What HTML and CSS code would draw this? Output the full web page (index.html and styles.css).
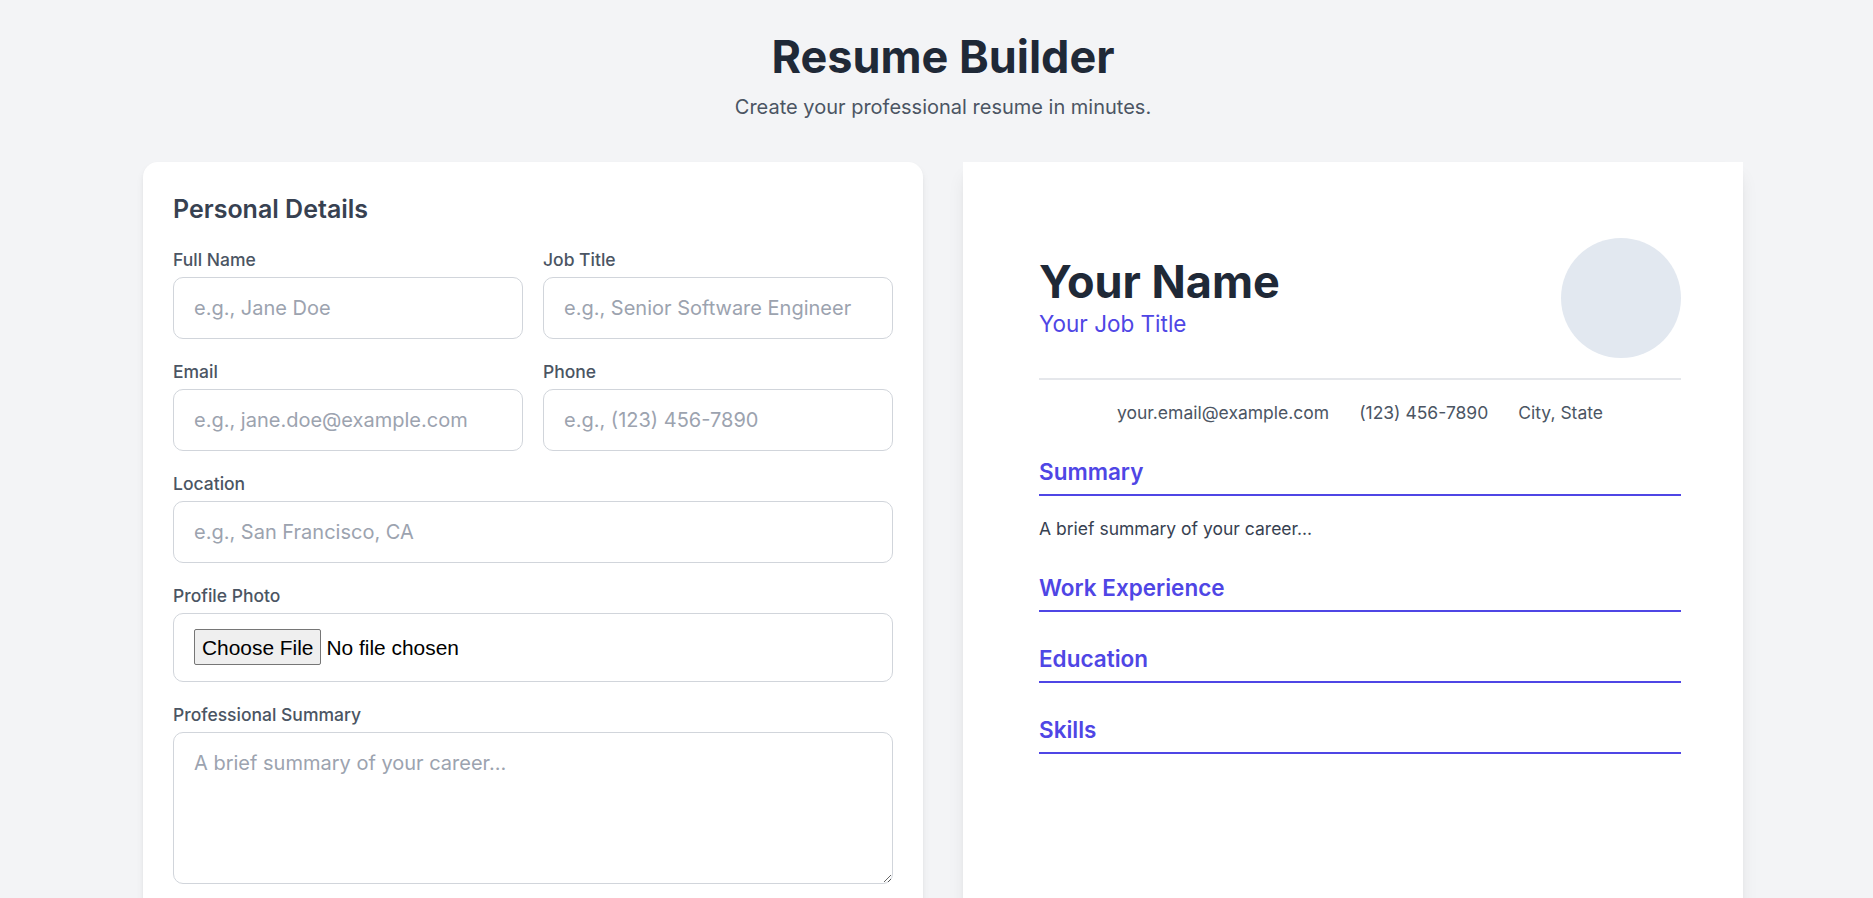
FILE: index.html
```html
<!DOCTYPE html>
<html lang="en">
<head>
<meta charset="utf-8">
<title>Resume Builder</title>
<link rel="stylesheet" href="styles.css">
</head>
<body>
<div class="page">
  <header class="page-header">
    <h1 class="page-title">Resume Builder</h1>
    <p class="page-subtitle">Create your professional resume in minutes.</p>
  </header>
  <main class="layout">
    <section class="editor">
      <h2 class="editor-title">Personal Details</h2>
      <div class="form-grid">
        <div class="field">
          <label class="field-label">Full Name</label>
          <input class="field-input" type="text" placeholder="e.g., Jane Doe">
        </div>
        <div class="field">
          <label class="field-label">Job Title</label>
          <input class="field-input" type="text" placeholder="e.g., Senior Software Engineer">
        </div>
        <div class="field">
          <label class="field-label">Email</label>
          <input class="field-input" type="email" placeholder="e.g., jane.doe@example.com">
        </div>
        <div class="field">
          <label class="field-label">Phone</label>
          <input class="field-input" type="tel" placeholder="e.g., (123) 456-7890">
        </div>
        <div class="field field-wide">
          <label class="field-label">Location</label>
          <input class="field-input" type="text" placeholder="e.g., San Francisco, CA">
        </div>
        <div class="field field-wide">
          <label class="field-label">Profile Photo</label>
          <input class="field-input field-file" type="file">
        </div>
        <div class="field field-wide">
          <label class="field-label">Professional Summary</label>
          <textarea class="field-input field-textarea" rows="4" placeholder="A brief summary of your career..."></textarea>
        </div>
      </div>
    </section>
    <section class="preview">
      <div class="resume-head">
        <div class="resume-id">
          <div class="resume-name">Your Name</div>
          <div class="resume-role">Your Job Title</div>
        </div>
        <div class="resume-photo"></div>
      </div>
      <div class="resume-contact">
        <span>your.email@example.com</span>
        <span>(123) 456-7890</span>
        <span>City, State</span>
      </div>
      <div class="resume-section">
        <h3 class="resume-section-title">Summary</h3>
        <p class="resume-text">A brief summary of your career...</p>
      </div>
      <div class="resume-section">
        <h3 class="resume-section-title">Work Experience</h3>
      </div>
      <div class="resume-section">
        <h3 class="resume-section-title">Education</h3>
      </div>
      <div class="resume-section">
        <h3 class="resume-section-title">Skills</h3>
      </div>
    </section>
  </main>
</div>
</body>
</html>
```

FILE: styles.css
```css
* { box-sizing: border-box; }

html, body {
  margin: 0;
  padding: 0;
  background: #f3f4f6;
  font-family: Inter, "Noto Sans", "Liberation Sans", sans-serif;
}

.page {
  width: 1600px;
  margin-left: 143px;
  padding: 32px 0 60px;
}

.page-header { text-align: center; }

.page-title {
  margin: 0 0 10px;
  font-size: 45px;
  line-height: 50px;
  font-weight: 700;
  color: #1f2937;
}

.page-subtitle {
  margin: 0 0 40px;
  font-size: 20px;
  line-height: 30px;
  color: #4b5563;
}

.layout {
  display: grid;
  grid-template-columns: 1fr 1fr;
  gap: 40px;
  align-items: start;
}

.editor {
  background: #fff;
  border-radius: 15px;
  padding: 30px;
  box-shadow: 0 5px 8px -1px rgba(0,0,0,0.08), 0 2px 5px -2px rgba(0,0,0,0.08);
}

.editor-title {
  margin: 0 0 20px;
  font-size: 25px;
  line-height: 35px;
  font-weight: 600;
  color: #374151;
}

.form-grid {
  display: grid;
  grid-template-columns: 1fr 1fr;
  gap: 20px;
}

.field { display: flex; flex-direction: column; min-width: 0; }
.field-wide { grid-column: 1 / -1; }

.field-label {
  display: block;
  margin-bottom: 5px;
  font-size: 17.5px;
  line-height: 25px;
  font-weight: 450;
  color: #4b5563;
}

.field-input {
  display: block;
  width: 100%;
  margin: 0;
  padding: 15px 20px;
  border: 1px solid #d1d5db;
  border-radius: 10px;
  background: #fff;
  font-family: Inter, "Noto Sans", sans-serif;
  font-size: 20px;
  line-height: 30px;
  color: #1f2937;
  outline: none;
}

.field-input::placeholder { color: #9ca3af; opacity: 1; }

.field-file {
  font-family: "Liberation Sans", Arial, sans-serif;
  font-size: 20.9px;
  line-height: 36px;
  color: #000;
}

.field-file::file-selector-button {
  font-family: "Liberation Sans", Arial, sans-serif;
  font-size: 20.9px;
  line-height: 23px;
  height: 36px;
  padding: 0 7px;
  margin: 0 5px 0 0;
  border: 1px solid #767676;
  border-radius: 2px;
  background: #efefef;
  color: #000;
}

.field-textarea {
  resize: vertical;
  height: 152px;
}

.preview {
  background: #fff;
  min-height: 1100px;
  padding: 76px 62px 60px 76px;
  box-shadow: 0 12px 18px -4px rgba(0,0,0,0.1), 0 5px 8px -5px rgba(0,0,0,0.1);
}

.resume-head {
  display: flex;
  justify-content: space-between;
  align-items: center;
  padding-bottom: 20px;
  border-bottom: 2px solid #e5e7eb;
}

.resume-id { padding-top: 2px; }

.resume-name {
  font-size: 45px;
  line-height: 50px;
  font-weight: 700;
  color: #1f2937;
}

.resume-role {
  margin-top: -1px;
  font-size: 22.5px;
  line-height: 35px;
  color: #4f46e5;
}

.resume-photo {
  width: 120px;
  height: 120px;
  border-radius: 50%;
  background: #e2e8f0;
  flex: none;
}

.resume-contact {
  display: flex;
  justify-content: center;
  gap: 30px;
  margin-top: 20px;
  font-size: 17.5px;
  line-height: 25px;
  color: #4b5563;
}

.resume-section { margin-top: 29px; }

.resume-section-title {
  margin: 0;
  padding-bottom: 5px;
  border-bottom: 2px solid #4f46e5;
  font-size: 22.5px;
  line-height: 35px;
  font-weight: 600;
  color: #4f46e5;
}

.resume-text {
  margin: 20px 0 0;
  font-size: 17.5px;
  line-height: 25px;
  color: #374151;
}
```
